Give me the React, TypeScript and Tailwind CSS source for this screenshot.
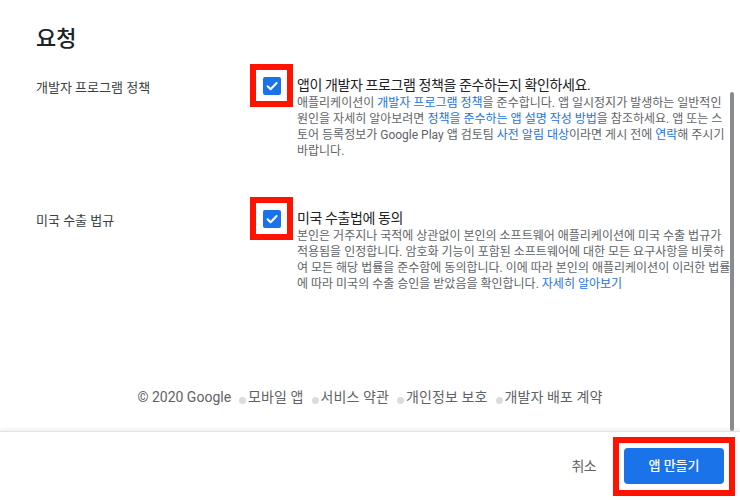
import React from "react";

const font = { fontFamily: "Roboto, 'Noto Sans CJK KR', sans-serif" };

const Check = () => (
  <div className="w-[18px] h-[18px] rounded-[2px] bg-[#1a73e8] flex items-center justify-center">
    <svg width="18" height="18" viewBox="0 0 18 18" fill="none">
      <path d="M4.6 9.2 L7.6 12.2 L13.6 6" stroke="white" strokeWidth="2" strokeLinecap="round" strokeLinejoin="round" />
    </svg>
  </div>
);

const Link = ({ children }: { children: React.ReactNode }) => (
  <span className="text-[#1a73e8]">{children}</span>
);

interface RowProps {
  label: string;
  title: string;
  lines: React.ReactNode[];
  className?: string;
}

const Row = ({ label, title, lines, className }: RowProps) => {
  return (
    <div className={"flex " + (className ?? "")}>
      <div className="w-[214px] shrink-0 pt-[14px] text-[13px] leading-[20px] text-[#3c4043]">
        {label}
      </div>
      <div className="w-[43px] h-[43px] shrink-0 border-[6px] border-[#ff1200] flex items-center justify-center">
        <Check />
      </div>
      <div className="ml-[4px] pt-[11px]">
        <div className="text-[14px] leading-[20px] tracking-[-0.4px] text-[#202124]">{title}</div>
        <div className="text-[12px] leading-[16px] text-[#5f6368]">
          {lines.map((l, i) => (
            <div key={i} className="whitespace-nowrap">
              {l}
            </div>
          ))}
        </div>
      </div>
    </div>
  );
};

const FooterItem = ({ children }: { children: React.ReactNode }) => (
  <span className="flex items-center">
    <span className="ml-[8px] mr-[2px] mt-[6px] w-[7px] h-[7px] rounded-full bg-[#dadce0]" />
    <span className="tracking-[0.1px]">{children}</span>
  </span>
);

export default function App() {
  return (
    <div className="relative w-[740px] h-[500px] bg-white overflow-hidden" style={font}>
      <div className="h-[431px] flex flex-col">
        <div className="pl-[36px] pt-[25px]">
          <h1 className="text-[22px] leading-[28px] font-medium text-[#202124]">요청</h1>
          <Row
            className="mt-[11px]"
            label="개발자 프로그램 정책"
            title="앱이 개발자 프로그램 정책을 준수하는지 확인하세요."
            lines={[
              <>애플리케이션이 <Link>개발자 프로그램 정책</Link>을 준수합니다. 앱 일시정지가 발생하는 일반적인</>,
              <>원인을 자세히 알아보려면 <Link>정책을 준수하는 앱 설명 작성 방법</Link>을 참조하세요. 앱 또는 스</>,
              <>토어 등록정보가 Google Play 앱 검토팀 <Link>사전 알림 대상</Link>이라면 게시 전에 <Link>연락</Link>해 주시기</>,
              <>바랍니다.</>,
            ]}
          />
          <Row
            className="mt-[38px]"
            label="미국 수출 법규"
            title="미국 수출법에 동의"
            lines={[
              <>본인은 거주지나 국적에 상관없이 본인의 소프트웨어 애플리케이션에 미국 수출 법규가</>,
              <>적용됨을 인정합니다. 암호화 기능이 포함된 소프트웨어에 대한 모든 요구사항을 비롯하</>,
              <>여 모든 해당 법률을 준수함에 동의합니다. 이에 따라 본인의 애플리케이션이 이러한 법률</>,
              <>에 따라 미국의 수출 승인을 받았음을 확인합니다. <Link>자세히 알아보기</Link></>,
            ]}
          />
        </div>
        <div className="mt-[95px] flex justify-center text-[14px] leading-[20px] text-[#5f6368]">
          <span>© 2020 Google</span>
          <FooterItem>모바일 앱</FooterItem>
          <FooterItem>서비스 약관</FooterItem>
          <FooterItem>개인정보 보호</FooterItem>
          <FooterItem>개발자 배포 계약</FooterItem>
        </div>
      </div>

      <div className="h-[69px] border-t border-[#e3e3e3] shadow-[0_-2px_3px_rgba(0,0,0,0.06)] flex items-center justify-end pr-[16px]">
        <span className="mr-[28px] text-[14px] tracking-[-0.6px] text-[#5f6368]">취소</span>
        <div className="relative">
          <button className="w-[100px] h-[36px] rounded-[4px] bg-[#1a73e8] text-white text-[13px] font-medium">
            앱 만들기
          </button>
          <span className="absolute -top-[11px] -left-[11px] -right-[11px] -bottom-[12px] border-[6px] border-[#ff1200]" />
        </div>
      </div>

      <div className="absolute left-[730px] top-[92px] w-[4px] h-[339px] rounded-full bg-[#8a8b8f]" />
    </div>
  );
}
